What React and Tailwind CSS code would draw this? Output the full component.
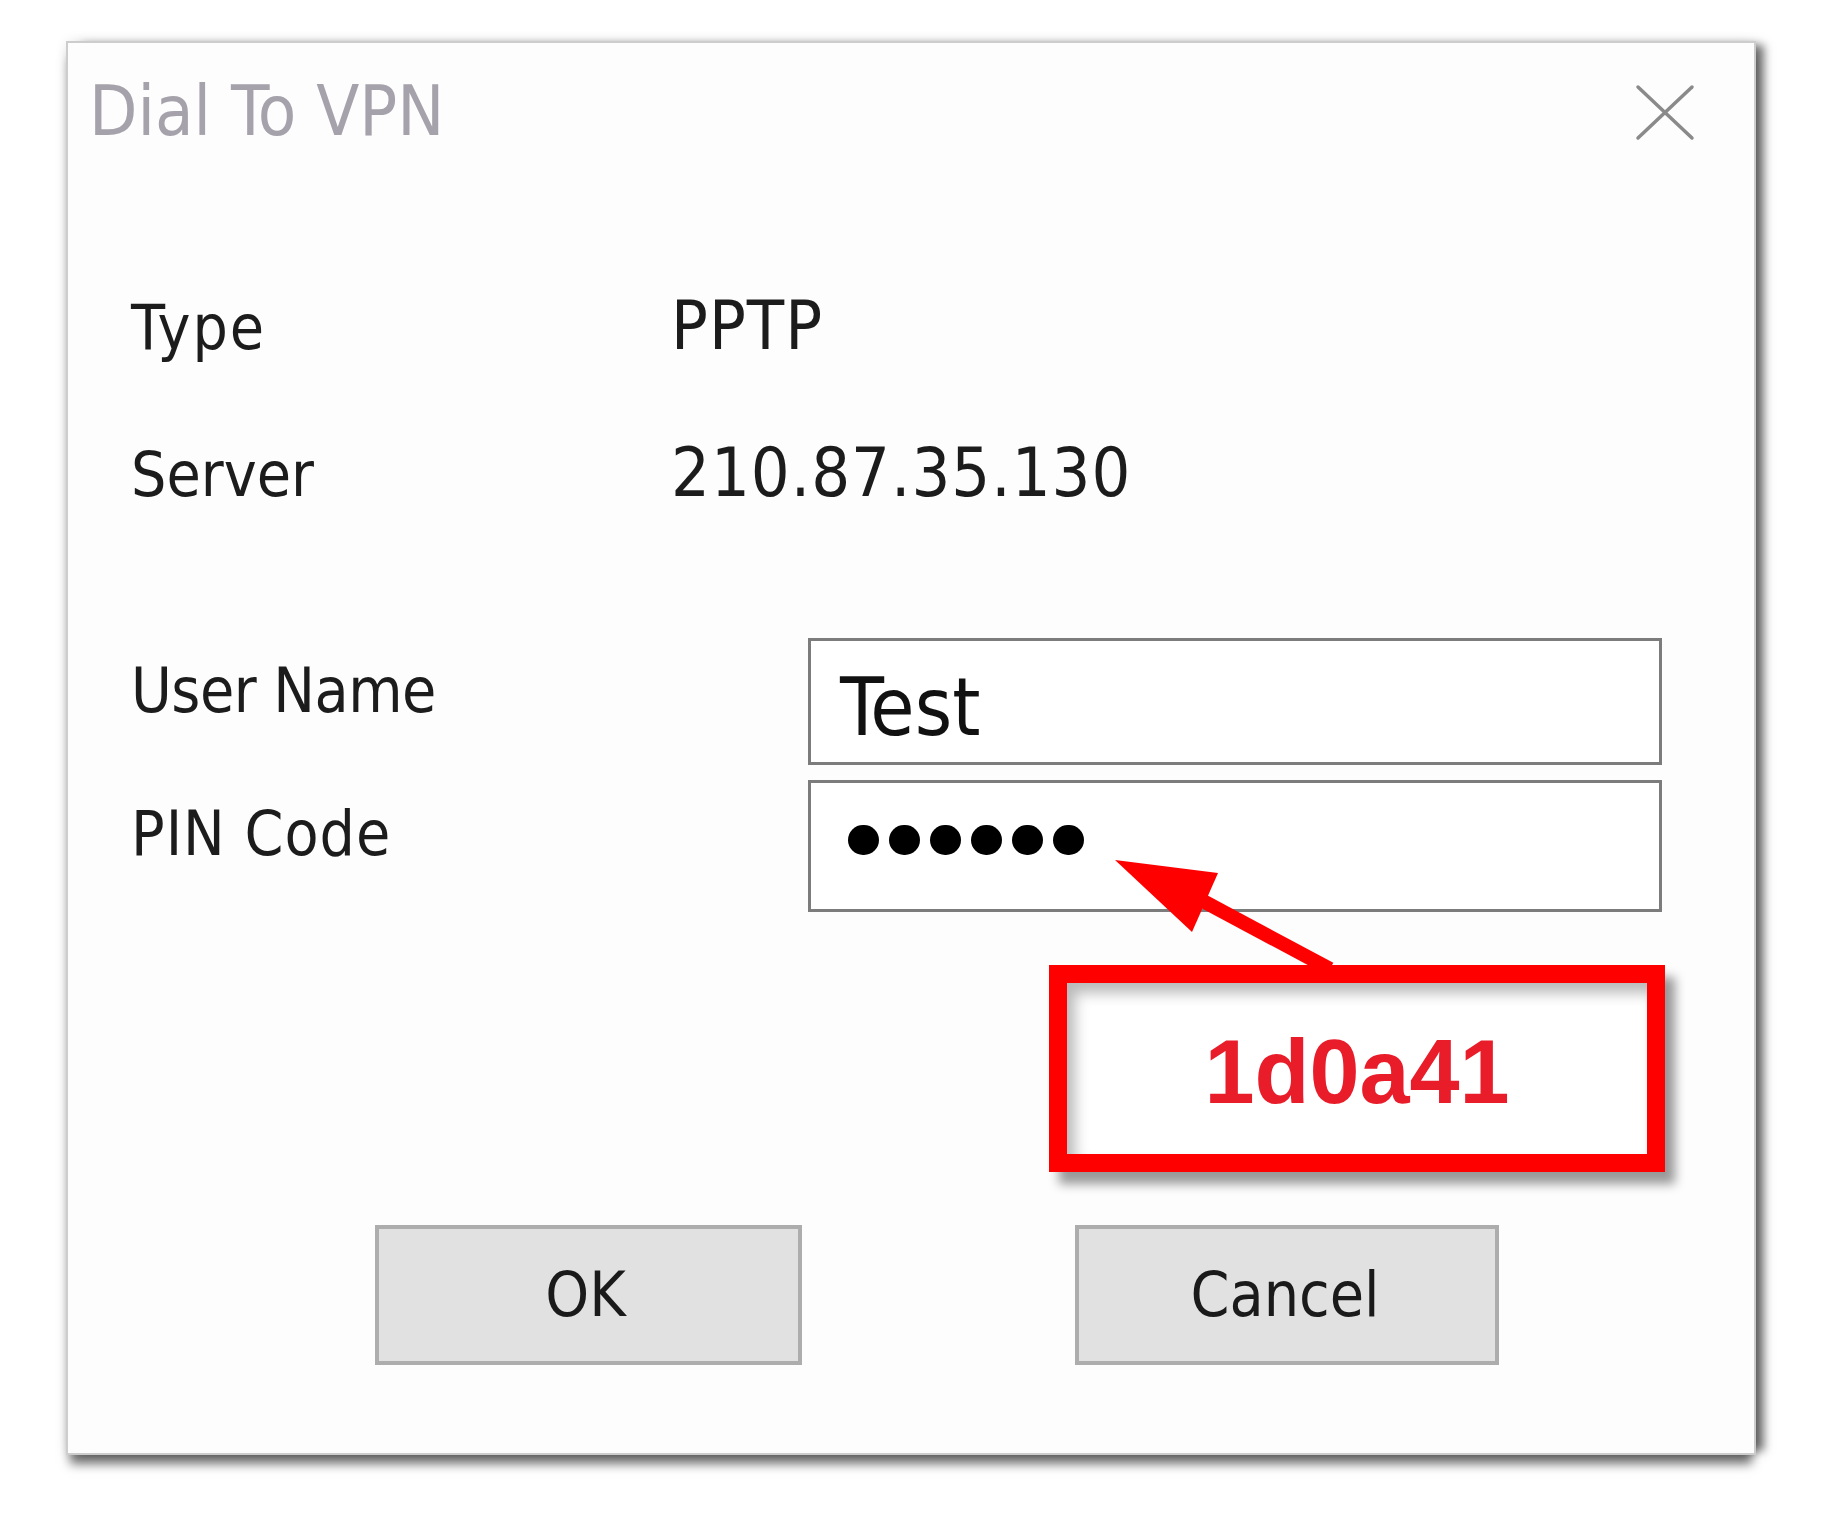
import React from "react";

const F = "font-['DejaVu_Sans_Condensed','Liberation_Sans',sans-serif]";

function CloseIcon() {
  return (
    <svg width="60" height="57" viewBox="0 0 60 57" className="mt-[8px] shrink-0">
      <line x1="3" y1="3" x2="57" y2="54" stroke="#8a8a8a" strokeWidth="3.5" strokeLinecap="round" />
      <line x1="57" y1="3" x2="3" y2="54" stroke="#8a8a8a" strokeWidth="3.5" strokeLinecap="round" />
    </svg>
  );
}

function InfoRow({ label, value, labelClass = "", valueClass = "" }) {
  return (
    <div className="flex items-baseline h-[72px] pl-[63px]">
      <span className={"w-[540px] shrink-0 text-[62px] leading-[70px] text-[#1c1c1c] " + labelClass}>{label}</span>
      <span className={"text-[68px] leading-[70px] text-[#1c1c1c] " + valueClass}>{value}</span>
    </div>
  );
}

export default function App() {
  return (
    <div className={"min-h-screen bg-white pt-[43px] pl-[68px] " + F}>
      <div className="relative w-[1686px] h-[1410px] bg-[#fdfdfd] shadow-[0_0_0_2px_#cdcdcd,0_0_12px_rgba(0,0,0,0.15),12px_0_9px_-2px_rgba(0,0,0,0.55),0_13px_10px_-2px_rgba(0,0,0,0.55)] flex flex-col">
        {/* title bar */}
        <div className="flex justify-between items-start pt-[33px] pl-[21px] pr-[59px] h-[102px]">
          <span className="text-[70px] leading-none text-[#a6a2ab]">Dial To VPN</span>
          <CloseIcon />
        </div>

        {/* info */}
        <div className="mt-[146px] flex flex-col gap-[75px]">
          <InfoRow label="Type" value="PPTP" labelClass="tracking-[2px]" valueClass="tracking-[1px]" />
          <InfoRow label="Server" value="210.87.35.130" valueClass="tracking-[1px]" />
        </div>

        {/* fields */}
        <div className="mt-[128px] flex flex-col gap-[15px] pl-[63px] pr-[92px]">
          <div className="flex">
            <span className="flex-1 pt-[18px] text-[62px] leading-[70px] text-[#1c1c1c] tracking-[-0.5px]">User Name</span>
            <div className="w-[854px] h-[127px] border-[3px] border-[#7c7c7c] bg-white pt-[27px] pl-[29px]">
              <span className="text-[80px] leading-none text-[#111]">Test</span>
            </div>
          </div>
          <div className="flex">
            <span className="flex-1 pt-[19px] text-[62px] leading-[70px] text-[#1c1c1c] tracking-[1px]">PIN Code</span>
            <div className="w-[854px] h-[132px] border-[3px] border-[#7c7c7c] bg-white pt-[42px] pl-[37px] flex items-start gap-[10px]">
              {[0, 1, 2, 3, 4, 5].map((i) => (
                <span key={i} className="block w-[31px] h-[30px] rounded-full bg-black" />
              ))}
            </div>
          </div>
        </div>

        {/* annotation box */}
        <div className="mt-[53px] self-end mr-[89px] w-[616px] h-[207px] border-[18px] border-[#ff0000] bg-white shadow-[inset_8px_10px_14px_rgba(0,0,0,0.28),10px_12px_10px_rgba(0,0,0,0.4)] flex items-center justify-center pt-[6px]">
          <span className="font-['Liberation_Sans',sans-serif] font-bold text-[90px] leading-none text-[#e91c2a]">1d0a41</span>
        </div>

        {/* buttons */}
        <div className="mt-[53px] flex pl-[307px] gap-[273px]">
          <button className="w-[427px] h-[140px] bg-[#e1e1e1] border-[4px] border-[#adadad] text-[62px] leading-none text-[#1a1a1a] flex items-center justify-center pr-[6px]">OK</button>
          <button className="w-[424px] h-[140px] bg-[#e1e1e1] border-[4px] border-[#adadad] text-[62px] leading-none text-[#1a1a1a] flex items-center justify-center pr-[4px]">Cancel</button>
        </div>

        {/* arrow overlay */}
        <svg className="absolute left-[1030px] top-[800px]" width="260" height="130" viewBox="0 0 260 130">
          <line x1="105" y1="58" x2="232" y2="126" stroke="#ff0000" strokeWidth="14" />
          <polygon points="17,17 120,30 94,89" fill="#ff0000" />
        </svg>
      </div>
    </div>
  );
}
